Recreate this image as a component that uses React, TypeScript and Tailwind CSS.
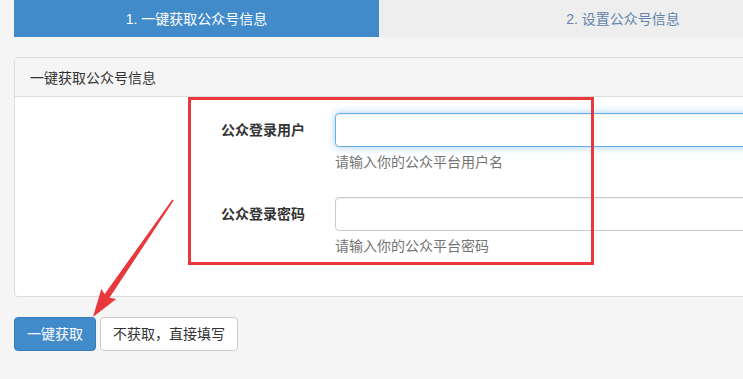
const fields = [
  { label: '公众登录用户', help: '请输入你的公众平台用户名', focused: true },
  { label: '公众登录密码', help: '请输入你的公众平台密码', focused: false },
];

export default function App() {
  return (
    <div className="relative h-[379px] w-[743px] overflow-hidden bg-[#f5f5f5] font-['Liberation_Sans','Noto_Sans_CJK_SC',sans-serif] text-sm leading-5 text-[#333333]">
      <div className="ml-[14px] w-[853px]">
        {/* 步骤 */}
        <div className="flex h-[37px]">
          <div className="flex w-[365px] items-center justify-center bg-[#428bca] text-white">
            1. 一键获取公众号信息
          </div>
          <div className="flex flex-1 items-center justify-center bg-[#eeeeee] text-[#6384ad]">
            2. 设置公众号信息
          </div>
        </div>

        <div className="mt-5 rounded border border-[#dddddd] bg-white">
          <div className="flex h-[39px] items-center rounded-t border-b border-[#dddddd] bg-[#f5f5f5] px-[15px] pt-px">
            一键获取公众号信息
          </div>
          <div className="px-[15px] pt-4 pb-[15px]">
            {fields.map((f) => (
              <div key={f.label} className="mb-[15px] grid grid-cols-[275px_1fr] gap-x-[30px]">
                <label className="pt-[7px] text-right font-bold">{f.label}</label>
                <div>
                  <input
                    type="text"
                    className={
                      f.focused
                        ? 'block h-[34px] w-full rounded border border-[#66afe9] bg-white px-3 shadow-[inset_0_1px_1px_rgba(0,0,0,0.075),0_0_8px_rgba(102,175,233,0.6)] outline-none'
                        : 'block h-[34px] w-full rounded border border-[#cccccc] bg-white px-3 shadow-[inset_0_1px_1px_rgba(0,0,0,0.075)] outline-none'
                    }
                  />
                  <p className="mt-[5px] mb-[10px] text-[#737373]">{f.help}</p>
                </div>
              </div>
            ))}
          </div>
        </div>

        <div className="mt-5 flex gap-1">
          <button className="h-[34px] rounded border border-[#357ebd] bg-[#428bca] px-3 text-white">
            一键获取
          </button>
          <button className="h-[34px] rounded border border-[#cccccc] bg-white px-3 text-[#333333]">
            不获取，直接填写
          </button>
        </div>
      </div>

      {/* 标注 */}
      <div className="absolute top-[97px] left-[188px] h-[168px] w-[406px] border-[3px] border-[#e8383d]" />
      <svg className="absolute top-0 left-0" width="743" height="379" viewBox="0 0 743 379">
        <polygon
          fill="#e8383d"
          points="173.7,200.5 109.5,297.7 116.2,299 93,317 101.4,288.8 104.5,294.3 172.3,199.5"
        />
      </svg>
    </div>
  );
}
